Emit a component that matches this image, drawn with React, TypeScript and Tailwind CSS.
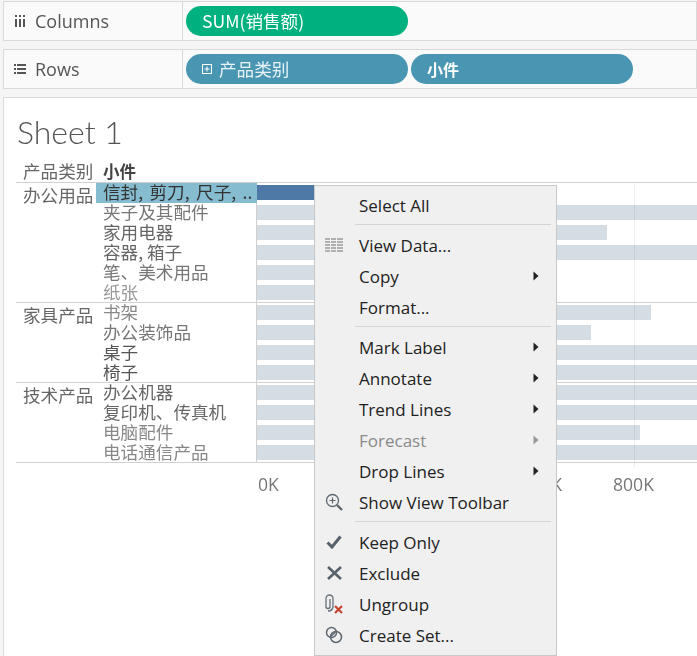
const cjk = "font-['Noto_Sans_CJK_SC','Noto_Sans',sans-serif]";

type Row = { t: string; w: number; c: string };
const groups: { name: string; rows: Row[] }[] = [
  {
    name: "办公用品",
    rows: [
      { t: "信封, 剪刀, 尺子, ..", w: 300, c: "text-[#333]" },
      { t: "夹子及其配件", w: 440, c: "text-[#777]" },
      { t: "家用电器", w: 350, c: "text-[#666]" },
      { t: "容器, 箱子", w: 440, c: "text-[#666]" },
      { t: "笔、美术用品", w: 280, c: "text-[#777]" },
      { t: "纸张", w: 120, c: "text-[#999]" },
    ],
  },
  {
    name: "家具产品",
    rows: [
      { t: "书架", w: 394, c: "text-[#888]" },
      { t: "办公装饰品", w: 334, c: "text-[#777]" },
      { t: "桌子", w: 440, c: "text-[#555]" },
      { t: "椅子", w: 440, c: "text-[#555]" },
    ],
  },
  {
    name: "技术产品",
    rows: [
      { t: "办公机器", w: 440, c: "text-[#666]" },
      { t: "复印机、传真机", w: 440, c: "text-[#666]" },
      { t: "电脑配件", w: 383, c: "text-[#888]" },
      { t: "电话通信产品", w: 440, c: "text-[#888]" },
    ],
  },
];

function Shelf({ icon, label, children }: { icon: React.ReactNode; label: string; children: React.ReactNode }) {
  return (
    <div className="ml-[3px] h-[40px] flex border border-[#d9d9d9] bg-[#fafafa]">
      <div className="w-[179px] shrink-0 border-r border-[#d9d9d9] flex items-center text-[#555] text-[18px] font-['Open_Sans',sans-serif]">
        <span className="w-[31px] flex justify-center text-[#555]">{icon}</span>
        <span>{label}</span>
      </div>
      <div className="flex items-center gap-[3px] pl-[3px]">{children}</div>
    </div>
  );
}

function Pill({ color, children }: { color: string; children: React.ReactNode }) {
  return (
    <div className={`w-[222px] h-[30px] rounded-full flex items-center pl-[16px] text-white text-[17.6px] ${color} ${cjk}`}>
      {children}
    </div>
  );
}

function Item({ icon, label, arrow, disabled }: { icon?: React.ReactNode; label: string; arrow?: boolean; disabled?: boolean }) {
  return (
    <div className={`h-[31px] flex items-center ${disabled ? "text-[#8a8a8a]" : "text-[#222]"}`}>
      <span className="w-[38px] mr-[6px] flex justify-center">{icon}</span>
      <span className="flex-1 pt-[2px]">{label}</span>
      {arrow && (
        <svg width="6" height="10" viewBox="0 0 6 10" className="mr-[17px]">
          <path d="M0.5 0.5 L5.5 5 L0.5 9.5 Z" fill={disabled ? "#999" : "#222"} />
        </svg>
      )}
    </div>
  );
}

const Sep = () => <div className="ml-[40px] mr-[5px] my-[4px] h-px bg-[#d4d4d4]" />;

export default function App() {
  return (
    <div className="relative w-[697px] h-[656px] overflow-hidden bg-[#f5f5f5]">
      <div className="pt-px flex flex-col gap-[8px]">
        <Shelf
          label="Columns"
          icon={
            <svg width="12" height="12" viewBox="0 0 12 12" fill="#555">
              <rect x="1" y="0" width="2" height="2" />
              <rect x="1" y="4" width="2" height="8" />
              <rect x="5" y="0" width="2" height="2" />
              <rect x="5" y="4" width="2" height="8" />
              <rect x="9" y="0" width="2" height="2" />
              <rect x="9" y="4" width="2" height="8" />
            </svg>
          }
        >
          <Pill color="bg-[#00b180]">SUM(销售额)</Pill>
        </Shelf>
        <Shelf
          label="Rows"
          icon={
            <svg width="14" height="12" viewBox="0 0 14 12" fill="#555">
              <rect x="1" y="1" width="2" height="2" />
              <rect x="4" y="1" width="9" height="2" />
              <rect x="1" y="5" width="2" height="2" />
              <rect x="4" y="5" width="9" height="2" />
              <rect x="1" y="9" width="2" height="2" />
              <rect x="4" y="9" width="9" height="2" />
            </svg>
          }
        >
          <Pill color="bg-[#4996b2]">
            <svg width="10" height="10" viewBox="0 0 10 10" className="mr-[7px]" fill="none" stroke="#fff">
              <rect x="0.5" y="0.5" width="9" height="9" />
              <path d="M2.5 5 H7.5 M5 2.5 V7.5" />
            </svg>
            <span className="text-[#e8f2f6]">产品类别</span>
          </Pill>
          <Pill color="bg-[#4996b2]">
            <span className="font-bold text-[16px]">小件</span>
          </Pill>
        </Shelf>
      </div>

      <div className={`ml-[3px] mt-[8px] h-[559px] border-l border-t border-[#d9d9d9] bg-white pl-[12px] ${cjk}`}>
        <div className="pt-[14px] pl-[1px] h-[62px] text-[32px] leading-[40px] font-light text-[#555] font-['Lato',sans-serif]">
          Sheet 1
        </div>
        <div className="flex h-[23px] items-center border-b border-[#d0d0d0] text-[17.6px]">
          <span className="w-[87px] pl-[7px] text-[#666] whitespace-nowrap">产品类别</span>
          <span className="font-bold text-[#444] text-[16.5px]">小件</span>
        </div>
        {groups.map((g) => (
          <div key={g.name} className="flex border-b border-[#d0d0d0]">
            <div className="w-[80px] shrink-0 pl-[7px] text-[17.6px] leading-[24px] h-[24px] text-[#666] whitespace-nowrap">{g.name}</div>
            <div className="flex-1 flex flex-col -mb-px">
              {g.rows.map((r, i) => {
                const selected = g.name === "办公用品" && i === 0;
                return (
                  <div key={r.t} className="flex h-[20px]">
                    <div className={`w-[161px] shrink-0 pl-[7px] text-[17.6px] leading-[18px] h-[20px] whitespace-nowrap overflow-hidden border-r ${selected ? "bg-[#86bccf] text-[#333] border-[#86bccf] [word-spacing:2.5px]" : `border-[#d0d0d0] ${r.c}`}`}>
                      {r.t}
                    </div>
                    <div className="flex-1 pt-[2px]">
                      <div className={`h-[15px] ${selected ? "bg-[#4e79a7]" : "bg-[#d5dde4]"}`} style={{ width: r.w }} />
                    </div>
                  </div>
                );
              })}
            </div>
          </div>
        ))}
        <div className="flex h-[42px] items-center text-[#777] text-[17.6px] font-['Open_Sans',sans-serif]">
          <span className="ml-[242px] w-[263px]">0K</span>
          <span className="w-[92px]">600K</span>
          <span>800K</span>
        </div>
      </div>

      <div className="absolute left-[634px] top-[183px] w-px h-[284px] bg-[#eeeeee] mix-blend-multiply pointer-events-none" />

      <div className="absolute left-[314px] top-[185px] w-[243px] h-[471px] border border-[#c8c8c8] bg-[#f0f0f0] pt-[3px] text-[17px] font-['Open_Sans',sans-serif]">
        <Item label="Select All" />
        <Sep />
        <Item
          label="View Data..."
          icon={
            <svg width="18" height="14" viewBox="0 0 18 14" fill="#b0b0b0">
              {[0, 3, 6, 9, 12].map((y) => (
                <g key={y}>
                  <rect x="0" y={y} width="5" height="2" />
                  <rect x="6" y={y} width="5" height="2" />
                  <rect x="12" y={y} width="6" height="2" />
                </g>
              ))}
            </svg>
          }
        />
        <Item label="Copy" arrow />
        <Item label="Format..." />
        <Sep />
        <Item label="Mark Label" arrow />
        <Item label="Annotate" arrow />
        <Item label="Trend Lines" arrow />
        <Item label="Forecast" arrow disabled />
        <Item label="Drop Lines" arrow />
        <Item
          label="Show View Toolbar"
          icon={
            <svg width="18" height="18" viewBox="0 0 18 18" fill="none" stroke="#5f6870">
              <circle cx="7.5" cy="7.5" r="6" strokeWidth="1.3" />
              <path d="M12 12 L17 17" strokeWidth="2.4" />
              <path d="M4.5 7.5 H10.5 M7.5 4.5 V10.5" strokeWidth="1.2" />
            </svg>
          }
        />
        <Sep />
        <Item
          label="Keep Only"
          icon={
            <svg width="16" height="14" viewBox="0 0 16 14" fill="none" stroke="#56616b" strokeWidth="3">
              <path d="M1.5 7.5 L6 12 L14.5 1.5" />
            </svg>
          }
        />
        <Item
          label="Exclude"
          icon={
            <svg width="15" height="14" viewBox="0 0 15 14" fill="none" stroke="#56616b" strokeWidth="2.6">
              <path d="M1 1 L14 13 M14 1 L1 13" />
            </svg>
          }
        />
        <Item
          label="Ungroup"
          icon={
            <svg width="20" height="20" viewBox="0 0 20 20" fill="none">
              <path d="M5 5 V13.5 A2.5 2.5 0 0 1 1 13.5 V4.5 A3.5 3.5 0 0 1 8 4.5 V13 A 5 5 0 0 1 3 17" transform="translate(1 0)" stroke="#66707a" strokeWidth="1.3" />
              <path d="M11 12 L18 19 M18 12 L11 19" stroke="#c8442e" strokeWidth="2.2" />
            </svg>
          }
        />
        <Item
          label="Create Set..."
          icon={
            <svg width="18" height="18" viewBox="0 0 18 18" fill="none" stroke="#5f6870" strokeWidth="1.5">
              <circle cx="6.5" cy="6.5" r="5" />
              <circle cx="11" cy="11" r="5.5" />
              <path d="M6 10.5 L10.5 6" strokeWidth="1.2" />
            </svg>
          }
        />
      </div>
    </div>
  );
}
